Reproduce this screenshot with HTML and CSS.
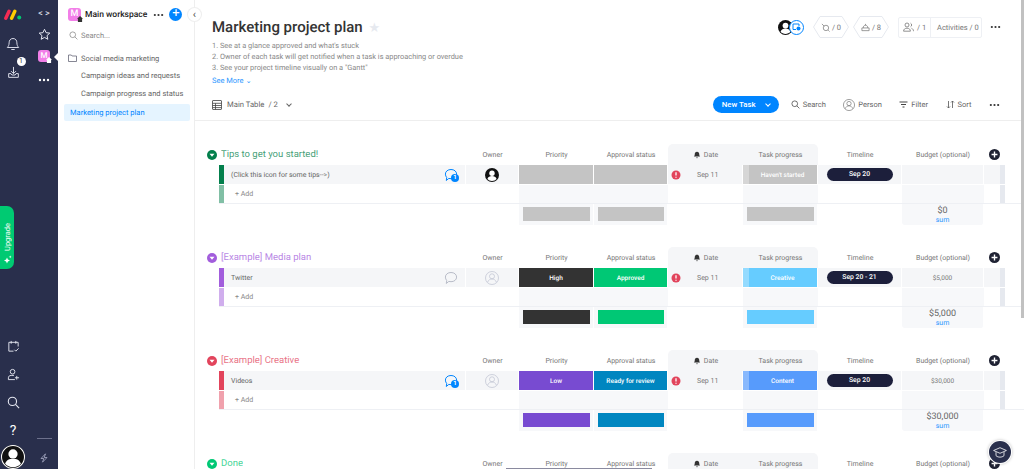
FILE: index.html
```html
<!DOCTYPE html>
<html lang="en">
<head>
    <meta charset="UTF-8">
    <title>Marketing project plan</title>
    <link rel="stylesheet" href="styles.css">
</head>
<body>
    <svg class="defs" width="0" height="0">
        <symbol id="i-chat" viewBox="0 0 14 14"><path d="M7 1.500c3.200 0 5.600 1.900 5.600 4.600S10.200 10.700 7 10.700c-.8 0-1.500-.1-2.200-.3L2.300 12.500l.4-3C1.900 8.600 1.400 7.400 1.400 6.100 1.400 3.400 3.800 1.500 7 1.500z" fill="none" stroke="currentColor" stroke-width="1"/></symbol>
        <symbol id="i-person" viewBox="0 0 14 14"><circle cx="7" cy="7" r="6.500" fill="none" stroke="currentColor" stroke-width=".8"/><circle cx="7" cy="5.300" r="2.500" fill="none" stroke="currentColor" stroke-width=".8"/><path d="M2.600 11.200c.8-2.200 2.400-3.200 4.400-3.200s3.600 1 4.400 3.200" fill="none" stroke="currentColor" stroke-width=".8"/></symbol>
        <symbol id="i-owner" viewBox="0 0 14 14"><circle cx="7" cy="7" r="7" fill="#111"/><circle cx="7" cy="5.200" r="2.700" fill="#fff"/><path d="M2.400 11c.7-2.300 2.500-3 4.600-3s3.900.7 4.600 3c-1.100 1.300-2.800 2-4.600 2s-3.500-.7-4.600-2z" fill="#fff"/></symbol>
        <symbol id="i-caret" viewBox="0 0 10 10"><circle cx="5" cy="5" r="5" fill="currentColor"/><path d="M2.500 3.800h5L5 6.800z" fill="#fff"/></symbol>
        <symbol id="i-alert" viewBox="0 0 10 10"><circle cx="5" cy="5" r="4.500" fill="#e2445c"/><path d="M5 2.200v3.300M5 6.800v1" stroke="#fff" stroke-width="1.300"/></symbol>
        <symbol id="i-bell" viewBox="0 0 10 10"><path d="M5 .8c1.900 0 2.800 1.400 2.800 3.200 0 1.500.6 2.300 1.200 3H1c.6-.7 1.200-1.500 1.200-3C2.200 2.200 3.100.8 5 .8zM4 7.900h2L5 9.300z" fill="#333"/></symbol>
        <symbol id="i-add" viewBox="0 0 12 12"><circle cx="6" cy="6" r="6" fill="#1f2233"/><path d="M6 2.800v6.400M2.800 6h6.400" stroke="#fff" stroke-width="1.500"/></symbol>
        <symbol id="i-dots" viewBox="0 0 12 4"><circle cx="2" cy="2" r="1.200" fill="currentColor"/><circle cx="6" cy="2" r="1.200" fill="currentColor"/><circle cx="10" cy="2" r="1.200" fill="currentColor"/></symbol>
        <symbol id="i-search" viewBox="0 0 12 12"><circle cx="5" cy="5" r="3.800" fill="none" stroke="currentColor"/><path d="M7.800 7.800l3.400 3.400" stroke="currentColor"/></symbol>
        <symbol id="i-hex" viewBox="0 0 36 22" preserveAspectRatio="none"><path d="M7 .5h22L35.500 11 29 21.500H7L.5 11z" fill="none" stroke="#e6e9ef"/></symbol>
    </svg>

    <div class="app">
        <nav class="rail">
            <div class="rail-a">
                <div class="rail-top">
                    <svg class="logo" width="18" height="11" viewBox="0 0 18 11">
                        <path d="M1.800 9.200L5 2.200" stroke="#f62b54" stroke-width="3.400" stroke-linecap="round"/>
                        <path d="M7.600 9.200L10.800 2.200" stroke="#ffcc00" stroke-width="3.400" stroke-linecap="round"/>
                        <circle cx="15.200" cy="8.600" r="2" fill="#00ca72"/>
                    </svg>
                    <svg class="rail-icon bell" width="14" height="15" viewBox="0 0 14 15"><path d="M7 1.500c2.700 0 3.900 2 3.900 4.400 0 2.200.8 3.500 1.800 4.600H1.300c1-1.100 1.800-2.400 1.800-4.600C3.100 3.500 4.300 1.500 7 1.500zM5.300 12.500h3.400" fill="none" stroke="#d6d8e6" stroke-width="1"/></svg>
                    <div class="inbox">
                        <svg class="rail-icon" width="13" height="13" viewBox="0 0 14 14"><path d="M7 1v7M4.300 5.500L7 8.200l2.700-2.700M1.800 8.200v4h10.400v-4h-2.500l-1 1.500H5.300l-1-1.500z" fill="none" stroke="#e6e8f2" stroke-width="1"/></svg>
                        <span class="badge">1</span>
                    </div>
                </div>
                <div class="upgrade">
                    <span>Upgrade</span>
                    <svg width="9" height="9" viewBox="0 0 9 9"><path d="M4 2.500l.9 2.100L7 5.500l-2.100.9L4 8.500l-.9-2.100L1 5.500l2.100-.9zM7.200.5l.4 1 1 .4-1 .4-.4 1-.4-1-1-.4 1-.4z" fill="#fff"/></svg>
                </div>
                <div class="rail-bottom">
                    <svg class="rail-icon" width="13" height="13" viewBox="0 0 14 14"><path d="M12 7V2.500H2v9.500h5M4.500 1v3M9.500 1v3M8 10.500l1.500 1.500 3-3" fill="none" stroke="#e6e8f2" stroke-width="1"/></svg>
                    <svg class="rail-icon" width="13" height="13" viewBox="0 0 14 14"><circle cx="6" cy="4" r="2.500" fill="none" stroke="#e6e8f2"/><path d="M1.500 12.500v-2c0-1.500 1.200-2.500 3-2.500h3M1.500 12.500h7M10.500 8.500v4M8.500 10.500h4.500" fill="none" stroke="#e6e8f2"/></svg>
                    <svg class="rail-icon" width="13" height="13" viewBox="0 0 12 12"><circle cx="5" cy="5" r="3.800" fill="none" stroke="#e6e8f2"/><path d="M7.800 7.800l3.400 3.400" stroke="#e6e8f2"/></svg>
                    <span class="help">?</span>
                    <svg class="me" width="24" height="24" viewBox="0 0 14 14"><use href="#i-owner"/><circle cx="7" cy="7" r="6.700" fill="none" stroke="#fff" stroke-width=".6"/></svg>
                </div>
            </div>
            <div class="rail-b">
                <div class="rail-top">
                    <span class="code">&lt; &gt;</span>
                    <svg class="rail-icon" width="13" height="13" viewBox="0 0 13 13"><path d="M6.500 1.300l1.600 3.400 3.700.4-2.800 2.500.8 3.700-3.300-1.900-3.300 1.900.8-3.700L1.200 5.100l3.700-.4z" fill="none" stroke="#e6e8f2"/></svg>
                    <div class="rail-ws"><span class="ws-avatar">M</span></div>
                    <svg class="rail-dots" width="12" height="4"><use href="#i-dots"/></svg>
                </div>
                <div class="rail-bottom">
                    <i class="rail-rule"></i>
                    <svg class="bolt" width="10" height="10" viewBox="0 0 10 10"><path d="M6.500.8L2 5.500h2.800L3.500 9.200 8 4.500H5.200z" fill="none" stroke="#a9adc7" stroke-width=".8"/></svg>
                </div>
            </div>
        </nav>

        <aside class="panel">
            <div class="panel-head">
                <span class="ws-avatar big">M</span>
                <strong>Main workspace</strong>
                <svg class="panel-dots" width="11" height="4"><use href="#i-dots"/></svg>
                <span class="plus">+</span>
            </div>
            <div class="panel-search">
                <svg width="9" height="9"><use href="#i-search"/></svg>
                <span>Search...</span>
            </div>
            <div class="folder">
                <svg width="9" height="8" viewBox="0 0 9 8"><path d="M.5 1h2.800l.8 1h4.400v5.500H.5z" fill="none" stroke="#676879" stroke-width=".8"/></svg>
                <span>Social media marketing</span>
            </div>
            <div class="board-link">Campaign ideas and requests</div>
            <div class="board-link">Campaign progress and status</div>
            <div class="board-link active">Marketing project plan</div>
            <button class="collapse">&#8249;</button>
        </aside>

        <main class="main">
            <header class="board-head">
                <div class="title-row">
                    <div>
                        <h1>Marketing project plan <span class="star">&#9733;</span></h1>
                        <ol class="desc">
                            <li>1. See at a glance approved and what's stuck</li>
                            <li>2. Owner of each task will get notified when a task is approaching or overdue</li>
                            <li>3. See your project timeline visually on a "Gantt"</li>
                        </ol>
                        <a class="see-more">See More &#8964;</a>
                    </div>
                    <div class="stats">
                        <div class="faces">
                            <svg width="15" height="15"><use href="#i-owner"/></svg>
                            <span class="guest">
                                <svg width="9" height="8" viewBox="0 0 9 8"><path d="M1 6.500V1h6v2M1 6.500h3" fill="none" stroke="#0085ff"/><circle cx="6.500" cy="5.500" r="2" fill="#0085ff"/></svg>
                            </span>
                        </div>
                        <div class="hex">
                            <svg class="hex-bg" width="36" height="22"><use href="#i-hex"/></svg>
                            <svg width="9" height="9" viewBox="0 0 10 10"><circle cx="5.500" cy="5.500" r="3" fill="none" stroke="#777" stroke-width=".8"/><path d="M1 1l2.500 2.500M8 8l1.500 1.500" stroke="#777" stroke-width=".8"/></svg>
                            <span>/ 0</span>
                        </div>
                        <div class="hex">
                            <svg class="hex-bg" width="36" height="22"><use href="#i-hex"/></svg>
                            <svg width="9" height="9" viewBox="0 0 10 10"><path d="M1 5.500h8v3H1zM2.500 5.500C2.500 3.500 3.500 2.500 5 2.500s2.500 1 2.500 3M5 1v1.500" fill="none" stroke="#777" stroke-width=".8"/></svg>
                            <span>/ 8</span>
                        </div>
                        <div class="activity">
                            <div class="members">
                                <svg width="11" height="10" viewBox="0 0 11 10"><circle cx="4" cy="3" r="2" fill="none" stroke="#777" stroke-width=".8"/><path d="M.6 9.200c0-2 1.400-3 3.400-3s3.400 1 3.400 3zM7.500 1.200a2 2 0 0 1 0 3.600M8.500 6.300c1.200.4 2 1.400 2 2.900" fill="none" stroke="#777" stroke-width=".8"/></svg>
                                <span>/ 1</span>
                            </div>
                            <span class="act-text">Activities / 0</span>
                        </div>
                        <svg class="more" width="11" height="4"><use href="#i-dots"/></svg>
                    </div>
                </div>
                <div class="toolbar">
                    <div class="view">
                        <svg width="10" height="10" viewBox="0 0 10 10"><path d="M.5 1c0-.3.2-.5.5-.5h8c.3 0 .5.200.5.500v8c0 .3-.2.500-.5.500H1c-.3 0-.5-.2-.5-.5zM.5 3.300h9M.5 5.500h9M.5 7.600h9M3.500 3.300v6.200" fill="none" stroke="#444" stroke-width=".8"/></svg>
                        <span>Main Table</span>
                        <span>/ 2</span>
                        <i class="chev"></i>
                    </div>
                    <div class="tools">
                        <button class="new-task"><span>New Task</span><i class="chev white"></i></button>
                        <a class="tool"><svg width="9" height="9"><use href="#i-search"/></svg>Search</a>
                        <a class="tool person"><svg width="12" height="12"><use href="#i-person"/></svg>Person</a>
                        <a class="tool filter"><svg width="9" height="7" viewBox="0 0 9 7"><path d="M.5 1h8M2 3.500h5M3.500 6h2" stroke="#444"/></svg>Filter</a>
                        <a class="tool sort"><svg width="9" height="9" viewBox="0 0 9 9"><path d="M2.500 1v7M1 6.500L2.500 8 4 6.500M6.500 8V1M5 2.500L6.500 1 8 2.500" fill="none" stroke="#555" stroke-width=".8"/></svg>Sort</a>
                        <svg class="more" width="11" height="4"><use href="#i-dots"/></svg>
                    </div>
                </div>
            </header>

            <section class="board">
                <div class="group tips">
                    <div class="g-row g-head">
                        <div class="g-title"><svg width="10" height="10"><use href="#i-caret"/></svg><span>Tips to get you started!</span></div>
                        <div class="h">Owner</div><div class="h">Priority</div><div class="h">Approval status</div>
                        <div class="h hl hl-l"><svg width="8" height="8"><use href="#i-bell"/></svg>Date</div><div class="h hl hl-r">Task progress</div>
                        <div class="h">Timeline</div><div class="h">Budget (optional)</div>
                        <div class="h"><svg width="11" height="11"><use href="#i-add"/></svg></div>
                    </div>
                    <div class="g-row g-item">
                        <i class="bar"></i>
                        <div class="c name"><span>(Click this icon for some tips--&gt;)</span><span class="chat on"><svg width="14" height="14"><use href="#i-chat"/></svg><b>1</b></span></div>
                        <div class="c"><svg width="14" height="14"><use href="#i-owner"/></svg></div>
                        <div class="c st grey"></div><div class="c st grey"></div>
                        <div class="c date"><svg width="10" height="10"><use href="#i-alert"/></svg><span>Sep 11</span></div>
                        <div class="c st prog grey"><i></i><span>Haven't started</span></div>
                        <div class="c"><span class="pill">Sep 20</span></div>
                        <div class="c num"></div>
                        <div class="c end"></div>
                    </div>
                    <div class="g-row g-add">
                        <i class="bar soft"></i>
                        <div class="add">+ Add</div>
                        <div></div><div class="f"></div><div class="f"></div><div></div><div class="f"></div><div></div><div class="f"></div>
                        <div class="end"></div>
                    </div>
                    <div class="g-row g-sum">
                        <div class="blank"></div>
                        <div class="s"><i class="grey"></i></div><div class="s"><i class="grey"></i></div><div></div>
                        <div class="s"><i class="grey"></i></div><div></div>
                        <div class="s total"><b>$0</b><a>sum</a></div>
                    </div>
                </div>

                <div class="group media">
                    <div class="g-row g-head">
                        <div class="g-title"><svg width="10" height="10"><use href="#i-caret"/></svg><span>[Example] Media plan</span></div>
                        <div class="h">Owner</div><div class="h">Priority</div><div class="h">Approval status</div>
                        <div class="h hl hl-l"><svg width="8" height="8"><use href="#i-bell"/></svg>Date</div><div class="h hl hl-r">Task progress</div>
                        <div class="h">Timeline</div><div class="h">Budget (optional)</div>
                        <div class="h"><svg width="11" height="11"><use href="#i-add"/></svg></div>
                    </div>
                    <div class="g-row g-item">
                        <i class="bar"></i>
                        <div class="c name"><span>Twitter</span><span class="chat"><svg width="14" height="14"><use href="#i-chat"/></svg></span></div>
                        <div class="c"><svg class="nobody" width="14" height="14"><use href="#i-person"/></svg></div>
                        <div class="c st dark">High</div><div class="c st green">Approved</div>
                        <div class="c date"><svg width="10" height="10"><use href="#i-alert"/></svg><span>Sep 11</span></div>
                        <div class="c st prog sky"><i></i><span>Creative</span></div>
                        <div class="c"><span class="pill">Sep 20 - 21</span></div>
                        <div class="c num">$5,000</div>
                        <div class="c end"></div>
                    </div>
                    <div class="g-row g-add">
                        <i class="bar soft"></i>
                        <div class="add">+ Add</div>
                        <div></div><div class="f"></div><div class="f"></div><div></div><div class="f"></div><div></div><div class="f"></div>
                        <div class="end"></div>
                    </div>
                    <div class="g-row g-sum">
                        <div class="blank"></div>
                        <div class="s"><i class="dark"></i></div><div class="s"><i class="green"></i></div><div></div>
                        <div class="s"><i class="sky"></i></div><div></div>
                        <div class="s total"><b>$5,000</b><a>sum</a></div>
                    </div>
                </div>

                <div class="group creative">
                    <div class="g-row g-head">
                        <div class="g-title"><svg width="10" height="10"><use href="#i-caret"/></svg><span>[Example] Creative</span></div>
                        <div class="h">Owner</div><div class="h">Priority</div><div class="h">Approval status</div>
                        <div class="h hl hl-l"><svg width="8" height="8"><use href="#i-bell"/></svg>Date</div><div class="h hl hl-r">Task progress</div>
                        <div class="h">Timeline</div><div class="h">Budget (optional)</div>
                        <div class="h"><svg width="11" height="11"><use href="#i-add"/></svg></div>
                    </div>
                    <div class="g-row g-item">
                        <i class="bar"></i>
                        <div class="c name"><span>Videos</span><span class="chat on"><svg width="14" height="14"><use href="#i-chat"/></svg><b>1</b></span></div>
                        <div class="c"><svg class="nobody" width="14" height="14"><use href="#i-person"/></svg></div>
                        <div class="c st purple">Low</div><div class="c st teal">Ready for review</div>
                        <div class="c date"><svg width="10" height="10"><use href="#i-alert"/></svg><span>Sep 11</span></div>
                        <div class="c st prog blue"><i></i><span>Content</span></div>
                        <div class="c"><span class="pill">Sep 20</span></div>
                        <div class="c num">$30,000</div>
                        <div class="c end"></div>
                    </div>
                    <div class="g-row g-add">
                        <i class="bar soft"></i>
                        <div class="add">+ Add</div>
                        <div></div><div class="f"></div><div class="f"></div><div></div><div class="f"></div><div></div><div class="f"></div>
                        <div class="end"></div>
                    </div>
                    <div class="g-row g-sum">
                        <div class="blank"></div>
                        <div class="s"><i class="purple"></i></div><div class="s"><i class="teal"></i></div><div></div>
                        <div class="s"><i class="blue"></i></div><div></div>
                        <div class="s total"><b>$30,000</b><a>sum</a></div>
                    </div>
                </div>

                <div class="group done">
                    <div class="g-row g-head">
                        <div class="g-title"><svg width="10" height="10"><use href="#i-caret"/></svg><span>Done</span></div>
                        <div class="h">Owner</div><div class="h">Priority</div><div class="h">Approval status</div>
                        <div class="h hl hl-l"><svg width="8" height="8"><use href="#i-bell"/></svg>Date</div><div class="h hl hl-r">Task progress</div>
                        <div class="h">Timeline</div><div class="h">Budget (optional)</div>
                        <div class="h"><svg width="11" height="11"><use href="#i-add"/></svg></div>
                    </div>
                </div>
            </section>

            <i class="scroll-thumb"></i>
            <button class="learn">
                <svg width="16" height="13" viewBox="0 0 20 16"><path d="M10 2L18 5.500 10 9 2 5.500zM5 7.500V12c1.500 1.300 3.200 1.800 5 1.800s3.500-.5 5-1.800V7.500" fill="none" stroke="#fff" stroke-width="1"/></svg>
            </button>
        </main>
    </div>
</body>
</html>
```

FILE: styles.css
```css
* { box-sizing: border-box; }
html, body { height: 100%; }
body { margin: 0; overflow: hidden; background: #fff; font-family: Roboto, "Liberation Sans", sans-serif; color: #555; text-rendering: geometricPrecision; }
.defs { position: absolute; }
svg { display: block; flex: none; }
button { font-family: inherit; border: none; padding: 0; }
ol { list-style: none; margin: 0; padding: 0; }

.app { display: flex; height: 469px; }

/* left rail */
.rail { width: 58px; flex: none; display: flex; background: #292f4c; }
.rail-a { width: 26px; display: flex; flex-direction: column; }
.rail-b { width: 32px; padding-left: 4px; display: flex; flex-direction: column; justify-content: space-between; align-items: center; }
.rail-a .rail-top { display: flex; flex-direction: column; align-items: center; padding-top: 9px; }
.bell { margin-top: 17px; }
.inbox { position: relative; margin-top: 14px; }
.badge { position: absolute; left: 10px; top: -9px; width: 9px; height: 9px; border-radius: 50%; background: #fff; color: #333; font-size: 7px; line-height: 9px; text-align: center; }
.upgrade { margin-top: 127px; width: 14px; height: 64px; border-radius: 0 7px 7px 0; background: #00ca72; color: #fff; display: flex; flex-direction: column; align-items: center; justify-content: flex-end; padding-bottom: 5px; gap: 4px; }
.upgrade span { writing-mode: vertical-rl; transform: rotate(180deg); font-size: 7.500px; }
.rail-bottom { display: flex; flex-direction: column; align-items: center; }
.rail-a .rail-bottom { margin-top: 71px; gap: 15px; }
.help { color: #fff; font-size: 14px; line-height: 14px; }
.me { margin-top: -8px; }
.rail-b .rail-top { display: flex; flex-direction: column; align-items: center; padding-top: 9px; position: relative; width: 100%; }
.code { color: #e6e8f2; font-size: 9px; line-height: 10px; height: 10px; }
.rail-b .rail-top .rail-icon { margin-top: 9px; }
.rail-ws { margin-top: 9px; position: relative; width: 100%; display: flex; justify-content: center; }
.rail-ws::after { content: ""; position: absolute; right: 0; top: 3px; border: 4px solid transparent; border-right-color: #fff; border-left: none; }
.rail-dots { color: #fff; margin-top: 16px; }
.ws-avatar { width: 12px; height: 12px; border-radius: 3px; background: #f27fe8; color: #fff; font-size: 8px; font-weight: 500; line-height: 12px; text-align: center; display: block; position: relative; }
.ws-avatar::after { content: ""; position: absolute; right: -2px; bottom: -1px; width: 6px; height: 6px; background: #fff; clip-path: polygon(50% 0, 100% 45%, 85% 45%, 85% 100%, 15% 100%, 15% 45%, 0 45%); }
.rail-rule { width: 15px; height: 1px; background: #6d718c; }
.bolt { margin: 14px 0 6px; }

/* workspace panel */
.panel { width: 137px; flex: none; border-right: 1px solid #eee; background: #fff; position: relative; padding: 0 4px 0 6px; }
.panel-head { display: flex; align-items: center; height: 29px; padding: 0 0 0 4px; }
.ws-avatar.big { width: 13px; height: 13px; line-height: 13px; font-size: 9px; }
.ws-avatar.big::after { background: #333; }
.panel-head strong { font-size: 8.500px; font-weight: 500; color: #222; margin-left: 4px; white-space: nowrap; }
.panel-dots { margin-left: 6px; color: #333; }
.plus { width: 13px; height: 13px; border-radius: 50%; background: #0085ff; color: #fff; font-size: 13px; line-height: 12px; text-align: center; margin-left: 5px; }
.panel-search { display: flex; align-items: center; gap: 3px; height: 12px; padding-left: 5px; font-size: 7.500px; color: #888; }
.folder { display: flex; align-items: center; gap: 4px; margin-top: 11px; height: 12px; padding-left: 4px; font-size: 7.500px; color: #666; }
.board-link { height: 18px; line-height: 18px; padding-left: 17px; font-size: 7.500px; color: #666; white-space: nowrap; }
.folder + .board-link { margin-top: 3px; }
.board-link.active { height: 17px; line-height: 17px; padding-left: 6px; margin-top: 1px; background: #e5f4ff; color: #0085ff; border-radius: 2px; }
.collapse { position: absolute; right: -7px; top: 8px; width: 13px; height: 13px; border-radius: 50%; background: #fff; box-shadow: 0 0 0 1px #eee; color: #555; font-size: 11px; line-height: 11px; }

/* board header */
.main { flex: 1; min-width: 0; position: relative; overflow: hidden; }
.board-head { height: 121px; border-bottom: 1px solid #eee; padding: 0 23px 0 17px; display: flex; flex-direction: column; }
.title-row { display: flex; justify-content: space-between; flex: 1; }
h1 { margin: 16px 0 0; font-size: 15px; line-height: 22px; font-weight: 500; color: #333; }
.star { color: #e6e9ef; font-size: 13px; margin-left: 2px; }
.desc { font-size: 7.400px; line-height: 11px; color: #888; }
.see-more { display: block; margin-top: 2px; font-size: 7.500px; line-height: 11px; color: #2b97ff; }
.stats { display: flex; align-items: center; height: 22px; margin-top: 16px; color: #777; font-size: 7.500px; }
.faces { display: flex; margin-right: 9px; }
.guest { width: 15px; height: 15px; border-radius: 50%; background: #fff; border: 1px solid #0085ff; margin-left: -4px; display: flex; align-items: center; justify-content: center; }
.hex { width: 36px; height: 22px; display: flex; align-items: center; justify-content: center; gap: 2px; margin-right: 4px; position: relative; }
.hex-bg { position: absolute; left: 0; top: 0; }
.activity { display: flex; align-items: center; height: 21px; width: 84px; margin-left: 5px; border: 1px solid #eef0f4; border-radius: 2px; }
.members { display: flex; align-items: center; gap: 3px; width: 32px; height: 100%; padding-left: 4px; border-right: 1px solid #eef0f4; white-space: nowrap; }
.act-text { margin-left: 6px; white-space: nowrap; }
.more { color: #333; margin-left: 8px; }
.toolbar { display: flex; justify-content: space-between; align-items: center; height: 17px; margin-bottom: 7px; padding-right: 1px; }
.view { display: flex; align-items: center; gap: 4px; font-size: 7.700px; color: #666; }
.view span:first-of-type { margin-left: 1px; }
.chev { width: 4px; height: 4px; border-right: 1px solid #666; border-bottom: 1px solid #666; transform: rotate(45deg); margin: -2px 0 0 5px; }
.chev.white { border-color: #fff; margin: -2px 0 0 10px; }
.tools { display: flex; align-items: center; }
.new-task { width: 66px; height: 17px; border-radius: 9px; background: #0085ff; color: #fff; font-size: 7.800px; font-weight: 500; display: flex; align-items: center; padding-left: 9px; margin-right: 12px; }
.tool { display: flex; align-items: center; gap: 3px; font-size: 7.500px; color: #666; margin-right: 17.500px; }
.tool svg { color: #444; }
.tool.person svg { color: #777; }
.tools .more { margin-left: 0; }

/* board */
.board { padding: 23px 0 0 24px; }
.group { margin-bottom: 22px; height: 81px; }
.g-row { display: grid; grid-template-columns: 5px 242px 53px 75px 74px 75px 75px 84px 82px 21px; }
.g-head { height: 21px; align-items: stretch; }
.g-title { grid-column: 1 / span 2; display: flex; align-items: center; gap: 4px; margin-left: -12px; font-size: 9.500px; }
.h { display: flex; align-items: center; justify-content: center; gap: 3px; font-size: 7px; color: #777; white-space: nowrap; }
.hl { background: #f5f6f8; }
.hl-l { border-top-left-radius: 5px; }
.hl-r { border-top-right-radius: 5px; }
.g-item { height: 20px; padding-bottom: 1px; }
.c { display: flex; align-items: center; justify-content: center; background: #f5f6f8; border-right: 1px solid #fff; font-size: 7px; }
.c.end { border-right: 5px solid #e6e9ef; }
.name { justify-content: space-between; padding: 0 7px 0 7px; color: #666; }
.chat { position: relative; color: #b8bcc8; }
.chat.on { color: #0085ff; }
.chat b { position: absolute; right: -1px; bottom: 0; width: 8px; height: 8px; border-radius: 50%; background: #0085ff; color: #fff; font-size: 6px; line-height: 8px; text-align: center; }
.nobody { color: #c3c6d4; }
.st { color: #fff; font-weight: 500; position: relative; font-size: 6.500px; }
.date { justify-content: flex-start; padding-left: 3px; color: #777; }
.date span { margin-left: 16px; }
.prog i { position: absolute; left: 0; top: 0; bottom: 0; width: 6px; background: rgba(255,255,255,.3); }
.prog span { margin-left: 5px; }
.pill { width: 66px; height: 13px; border-radius: 7px; background: #1c1f3b; color: #fff; font-weight: 500; font-size: 6.800px; line-height: 13px; text-align: center; }
.num { color: #777; font-size: 6.500px; }
.bar { background: #333; }
.bar.soft { opacity: .5; }
.g-add { height: 19px; padding-bottom: 1px; border-bottom: 1px solid #eef0f4; }
.add { padding-left: 11px; font-size: 7px; line-height: 18px; color: #888; }
.f { background: #f7f8fa; }
.end { border-right: 5px solid #e6e9ef; }
.g-sum { height: 21px; }
.blank { grid-column: 1 / span 3; }
.s { background: #f7f8fa; padding: 3px 3px 4px 4px; border-right: 1px solid #fff; }
.s i { display: block; height: 14px; }
.total { display: flex; flex-direction: column; align-items: center; padding: 3px 0 0; border-radius: 0 0 3px 3px; }
.total b { font-size: 9px; line-height: 9px; font-weight: 400; color: #666; }
.total a { font-size: 7px; line-height: 8px; color: #2b97ff; }

.grey { background: #c4c4c4; }
.dark { background: #333; }
.green { background: #00c875; }
.sky { background: #66ccff; }
.purple { background: #784bd1; }
.teal { background: #0086c0; }
.blue { background: #579bfc; }

.tips .g-title { color: #037f4c; }
.tips .bar { background: #037f4c; }
.media .g-title { color: #a25ddc; }
.media .bar { background: #a25ddc; }
.creative .g-title { color: #e2445c; }
.creative .bar { background: #e2445c; }
.done .g-title { color: #00c875; }
.done .g-head { position: relative; }
.done .g-head::after { content: ""; position: absolute; left: 287px; top: 15px; width: 146px; height: 1px; background: #8a8a9f; }
.g-title span { opacity: .75; }

.scroll-thumb { position: absolute; right: 0; top: 0; width: 3px; height: 318px; background: #c1c1c1; }
.learn { position: absolute; right: 13px; bottom: 6px; width: 22px; height: 22px; border-radius: 50%; background: #292f4c; display: flex; align-items: center; justify-content: center; box-shadow: 0 0 0 1px #fff, 0 0 3px 1px rgba(0,0,0,.25); }
```
